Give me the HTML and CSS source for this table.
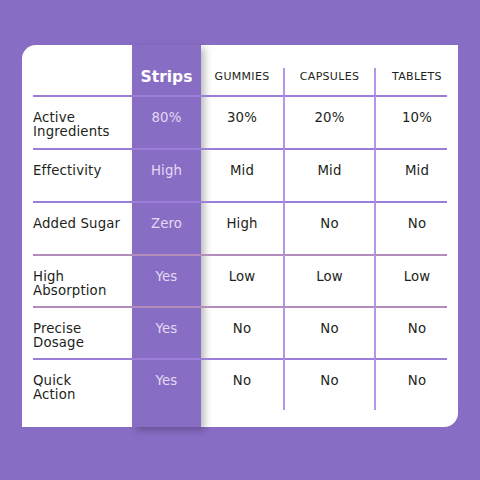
FILE: index.html
```html
<!DOCTYPE html>
<html>
<head>
<meta charset="utf-8">
<link rel="stylesheet" href="styles.css">
</head>
<body>
<div class="card">
  <div class="strip-bg"></div>

  <div class="cell head"></div>
  <div class="cell head strip r1">Strips</div>
  <div class="cell head">Gummies</div>
  <div class="cell head v">Capsules</div>
  <div class="cell head v t">Tablets</div>

  <div class="cell label">Active<br>Ingredients</div>
  <div class="cell strip r2">80%</div>
  <div class="cell">30%</div>
  <div class="cell v">20%</div>
  <div class="cell v t">10%</div>

  <div class="cell label">Effectivity</div>
  <div class="cell strip r3">High</div>
  <div class="cell">Mid</div>
  <div class="cell v">Mid</div>
  <div class="cell v t">Mid</div>

  <div class="cell label">Added Sugar</div>
  <div class="cell strip r4">Zero</div>
  <div class="cell">High</div>
  <div class="cell v">No</div>
  <div class="cell v t">No</div>

  <div class="cell label pink">High<br>Absorption</div>
  <div class="cell strip r5 pink">Yes</div>
  <div class="cell pink">Low</div>
  <div class="cell v pink">Low</div>
  <div class="cell v t pink">Low</div>

  <div class="cell label pink">Precise<br>Dosage</div>
  <div class="cell strip r6 pink">Yes</div>
  <div class="cell pink">No</div>
  <div class="cell v pink">No</div>
  <div class="cell v t pink">No</div>

  <div class="cell label">Quick<br>Action</div>
  <div class="cell strip r7">Yes</div>
  <div class="cell">No</div>
  <div class="cell v">No</div>
  <div class="cell v t">No</div>
</div>
</body>
</html>
```

FILE: styles.css
```css
html, body {
  margin: 0;
  padding: 0;
  background: #886dc4;
}

body {
  width: 480px;
  height: 480px;
  overflow: hidden;
  font-family: "DejaVu Sans", sans-serif;
}

.card {
  margin: 45px 22px 0 22px;
  width: 436px;
  box-sizing: border-box;
  padding: 23px 11px 17px 11px;
  background: #ffffff;
  border-radius: 14px 0 14px 0;
  display: grid;
  grid-template-columns: 99px 69px 82px 91px 73px;
  grid-template-rows: 27px 53px 53px 53px 52px 52px 52px;
}

.strip-bg {
  grid-column: 2;
  grid-row: 1 / -1;
  margin: -23px 0 -17px 0;
  background: #886dc4;
  box-shadow: 4px 3px 7px rgba(0, 0, 0, 0.26);
  position: relative;
  z-index: 1;
}

.cell {
  position: relative;
  z-index: 2;
  box-sizing: border-box;
  border-top: 2px solid #9b7ed8;
  padding-top: 14px;
  font-size: 13.3px;
  line-height: 14px;
  letter-spacing: 0.15px;
  color: #231f20;
  text-align: center;
}

.cell.pink {
  border-top-color: #b38cbc;
}

.head {
  border-top: none;
  padding-top: 0;
  line-height: 18px;
  font-size: 11px;
  text-transform: uppercase;
  letter-spacing: 0.3px;
}

.label {
  text-align: left;
}

.v {
  border-left: 2px solid #b596ea;
}

.t {
  padding-left: 11px;
}

.strip {
  grid-column: 2;
  color: #e4daf4;
}

.head.strip {
  text-transform: none;
  color: #ffffff;
  font-weight: bold;
  font-size: 15.5px;
  letter-spacing: 0;
}

.r1 { grid-row: 1; }
.r2 { grid-row: 2; }
.r3 { grid-row: 3; }
.r4 { grid-row: 4; }
.r5 { grid-row: 5; }
.r6 { grid-row: 6; }
.r7 { grid-row: 7; }
```
